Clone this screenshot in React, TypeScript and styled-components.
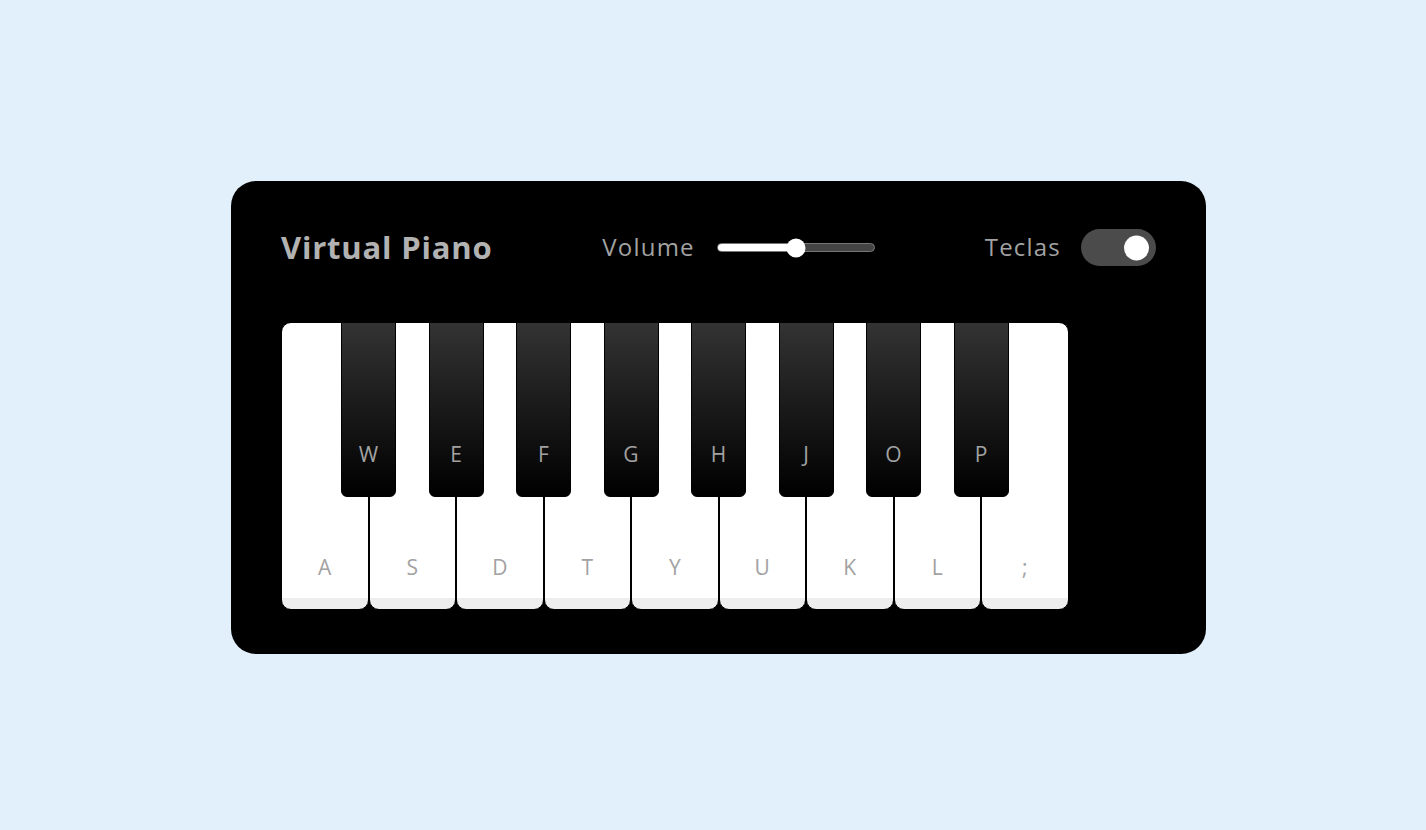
import React, { useState } from "react";
import styled, { createGlobalStyle } from "styled-components";

const GlobalStyle = createGlobalStyle`
  * { box-sizing: border-box; margin: 0; padding: 0; }
  html, body { width: 100%; height: 100%; }
  body {
    background: #E2F0FB;
    font-family: "Open Sans", "Liberation Sans", sans-serif;
  }
`;

const Page = styled.div`
  min-height: 100vh;
  display: flex;
  align-items: center;
  justify-content: center;
  padding: 5px 0 0 11px;
`;

const Card = styled.div`
  width: 975px;
  padding: 44px 50px;
  border-radius: 25px;
  background: #000;
`;

const Header = styled.header`
  display: flex;
  align-items: center;
  justify-content: space-between;
  height: 47px;
  padding-bottom: 2px;
  color: #b2b2b2;
`;

const Title = styled.h2`
  font-size: 31px;
  font-weight: 700;
  line-height: 40px;
  color: #b2b2b2;
  letter-spacing: 0.8px;
  padding-bottom: 1px;
`;

const Column = styled.div`
  display: flex;
  align-items: center;
`;

const Label = styled.span<{ $gap: number }>`
  font-size: 24px;
  font-weight: 400;
  line-height: 32px;
  padding-bottom: 1px;
  color: #a2a2a2;
  letter-spacing: 1.2px;
  margin-right: ${(p) => p.$gap}px;
`;

const Track = styled.div`
  position: relative;
  width: 158px;
  height: 9px;
  border-radius: 6px;
  background: #444;
  border: 1px solid #777;
`;

const Fill = styled.div`
  height: 100%;
  border-radius: 6px;
  background: #fff;
`;

const Thumb = styled.div`
  position: absolute;
  top: 50%;
  width: 19px;
  height: 19px;
  border-radius: 50%;
  background: #fff;
  transform: translate(-50%, -50%);
`;

const Toggle = styled.button<{ $on: boolean }>`
  position: relative;
  width: 75px;
  height: 37px;
  border: none;
  border-radius: 30px;
  background: #4b4b4b;
  cursor: pointer;
  &::before {
    content: "";
    position: absolute;
    top: 50%;
    left: ${(p) => (p.$on ? "43px" : "6px")};
    width: 25px;
    height: 25px;
    border-radius: 50%;
    background: ${(p) => (p.$on ? "#fff" : "#8c8c8c")};
    transform: translateY(-50%);
  }
`;

const Keys = styled.ul`
  display: flex;
  list-style: none;
  margin-top: 50px;
`;

const WhiteKey = styled.li`
  position: relative;
  flex: none;
  width: 87.5px;
  height: 288px;
  border: 1px solid #000;
  border-radius: 10px;
  background: linear-gradient(#fff 96%, #eee 96%);
  cursor: pointer;
`;

const BlackKey = styled.li`
  position: relative;
  z-index: 2;
  flex: none;
  width: 55px;
  height: 175px;
  margin: 0 -27.5px;
  border: 1px solid #000;
  border-radius: 0 0 6px 6px;
  background: linear-gradient(#333, #000);
  cursor: pointer;
`;

const KeyLabel = styled.span`
  position: absolute;
  left: 0;
  bottom: 25px;
  width: 100%;
  text-align: center;
  font-size: 21px;
  line-height: 34px;
  color: #a2a2a2;
`;

const keys: { k: string; black: boolean }[] = [
  { k: "A", black: false },
  { k: "W", black: true },
  { k: "S", black: false },
  { k: "E", black: true },
  { k: "D", black: false },
  { k: "F", black: true },
  { k: "T", black: false },
  { k: "G", black: true },
  { k: "Y", black: false },
  { k: "H", black: true },
  { k: "U", black: false },
  { k: "J", black: true },
  { k: "K", black: false },
  { k: "O", black: true },
  { k: "L", black: false },
  { k: "P", black: true },
  { k: ";", black: false },
];

export default function App() {
  const [on, setOn] = useState(true);
  const volume = 0.5;
  return (
    <>
      <GlobalStyle />
      <Page>
        <Card>
          <Header>
            <Title>Virtual Piano</Title>
            <Column>
              <Label $gap={22}>Volume</Label>
              <Track>
                <Fill style={{ width: `${volume * 100}%` }} />
                <Thumb style={{ left: `${volume * 100}%` }} />
              </Track>
            </Column>
            <Column>
              <Label $gap={20}>Teclas</Label>
              <Toggle $on={on} onClick={() => setOn(!on)} aria-label="Teclas" />
            </Column>
          </Header>
          <Keys>
            {keys.map(({ k, black }) =>
              black ? (
                <BlackKey key={k}>{on && <KeyLabel>{k}</KeyLabel>}</BlackKey>
              ) : (
                <WhiteKey key={k}>{on && <KeyLabel>{k}</KeyLabel>}</WhiteKey>
              )
            )}
          </Keys>
        </Card>
      </Page>
    </>
  );
}
